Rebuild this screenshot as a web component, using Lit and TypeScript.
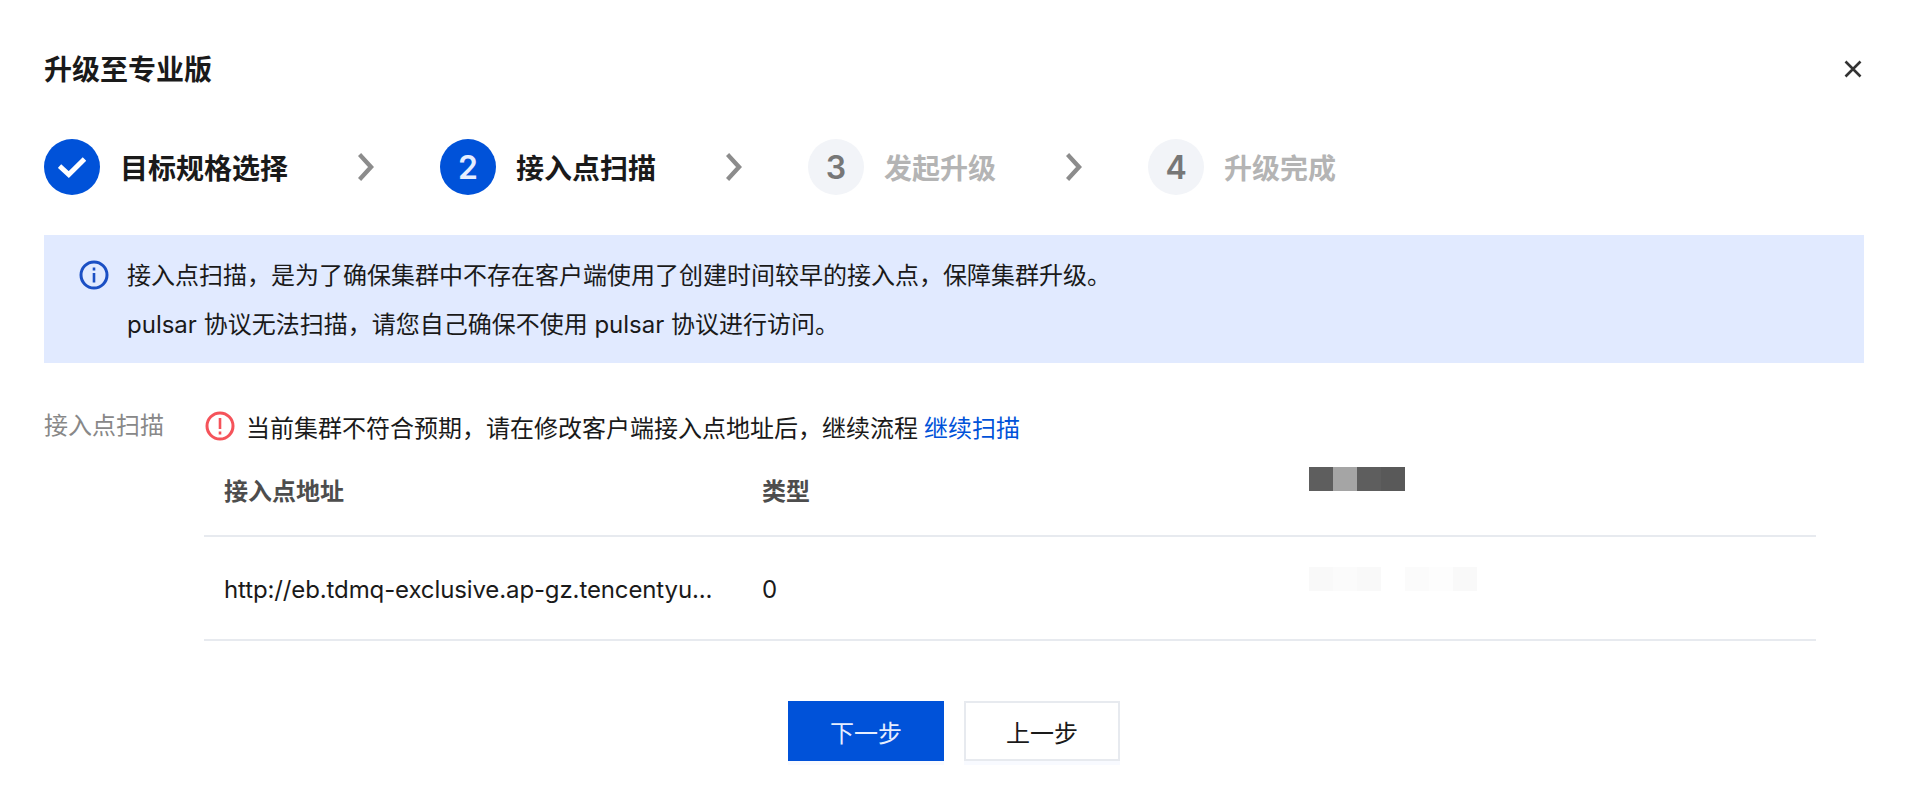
import { LitElement, html, css, svg } from 'lit';
import { customElement } from 'lit/decorators.js';

interface Step {
  label: string;
  state: 'done' | 'current' | 'todo';
}

const STEPS: Step[] = [
  { label: '目标规格选择', state: 'done' },
  { label: '接入点扫描', state: 'current' },
  { label: '发起升级', state: 'todo' },
  { label: '升级完成', state: 'todo' },
];

// Mosaic colours standing in for the redacted column
const HEAD_MOSAIC = ['#5e5e5e', '#a5a5a5', '#5e5e5e', '#595959'];
const CELL_MOSAIC = ['#f9f9f9', '#fbfbfb', '#f9f9f9', '#ffffff', '#fbfbfb', '#fdfdfd', '#f9f9f9'];

const chevron = svg`<path d="M1.5 1.5 L13 14 L1.5 26.5" fill="none" stroke="#8c8c8c" stroke-width="4.4"/>`;

@customElement('app-root')
export class AppRoot extends LitElement {
  static styles = css`
    :host {
      display: block;
      height: 808px;
      box-sizing: border-box;
      padding: 0 44px;
      background: #fff;
      color: #1a1a1a;
      font-family: 'Inter', 'Noto Sans CJK SC', sans-serif;
      font-size: 24px;
      position: relative;
      overflow: hidden;
    }

    .header {
      height: 139px;
      padding-top: 49px;
      box-sizing: border-box;
      font-size: 28px;
      line-height: 42px;
      font-weight: 600;
    }
    .close {
      position: absolute;
      top: 60px;
      right: 46px;
      width: 18px;
      height: 18px;
    }

    .steps {
      display: flex;
      align-items: center;
      height: 56px;
    }
    .step {
      display: flex;
      align-items: center;
      gap: 20px;
    }
    .circle {
      width: 56px;
      height: 56px;
      border-radius: 50%;
      display: flex;
      align-items: center;
      justify-content: center;
      font-size: 32px;
      font-weight: 600;
      flex: none;
    }
    .step-label {
      font-size: 28px;
      font-weight: 600;
      white-space: nowrap;
    }
    .done .circle,
    .current .circle {
      background: #0052d9;
      color: #e6eeff;
    }
    .todo .circle {
      background: #f2f4f8;
      color: #777;
    }
    .todo .step-label {
      color: #b4b4b4;
    }
    .sep {
      width: 16px;
      height: 28px;
      margin: 0 66px 0 70px;
      flex: none;
    }

    .alert {
      margin-top: 40px;
      height: 128px;
      box-sizing: border-box;
      background: #e1eaff;
      padding: 16px 35px;
      display: flex;
      gap: 18px;
      line-height: 49px;
    }
    .alert svg {
      width: 30px;
      height: 30px;
      margin-top: 9px;
      flex: none;
    }

    .form {
      display: flex;
      margin-top: 40px;
    }
    .form-label {
      width: 160px;
      flex: none;
      color: #888;
      line-height: 46px;
    }
    .form-body {
      width: 1612px;
    }
    .status {
      display: flex;
      align-items: center;
      height: 46px;
      box-sizing: border-box;
    }
    .status svg {
      width: 30px;
      height: 30px;
      margin: 0 11px 0 1px;
      flex: none;
    }
    .status span {
      white-space: nowrap;
    }
    .status a {
      color: #0052d9;
      margin-left: 6px;
    }

    .row {
      display: grid;
      grid-template-columns: 538px 547px 1fr;
      padding: 0 20px;
      border-bottom: 2px solid #e7eaef;
      align-items: center;
      box-sizing: border-box;
    }
    .head {
      height: 88px;
      padding-bottom: 6px;
      color: #4d4d4d;
      font-weight: 600;
    }
    .body {
      height: 104px;
      padding-top: 3px;
    }
    .url {
      white-space: nowrap;
      letter-spacing: -0.12px;
    }
    .mosaic {
      display: flex;
    }
    .mosaic i {
      width: 24px;
      height: 24px;
      display: block;
    }
    .head .mosaic {
      margin-top: -20px;
    }
    .body .mosaic {
      margin-top: -21px;
    }

    .actions {
      display: flex;
      justify-content: center;
      gap: 20px;
      margin-top: 60px;
    }
    button {
      width: 156px;
      height: 60px;
      font: inherit;
      border: 2px solid #e7eaef;
      background: #fff;
      color: #1a1a1a;
      padding: 0;
      box-shadow: 0 4px 0 #f8faff;
    }
    button.primary {
      background: #0052d9;
      border-color: #0052d9;
      color: #e6eeff;
    }
  `;

  private renderCircle(step: Step, index: number) {
    if (step.state === 'done') {
      return html`<svg width="28" height="24" viewBox="0 0 28 24">
        <path d="M1.5 11 L10.8 19.5 L26.5 4" fill="none" stroke="#fff" stroke-width="5" />
      </svg>`;
    }
    return index + 1;
  }

  private renderMosaic(colors: string[]) {
    return html`<div class="mosaic">
      ${colors.map((c) => html`<i style="background:${c}"></i>`)}
    </div>`;
  }

  render() {
    return html`
      <div class="header">升级至专业版</div>
      <svg class="close" viewBox="0 0 18 18">
        <path d="M1.5 1.5 L16.5 16.5 M16.5 1.5 L1.5 16.5" stroke="#333" stroke-width="2.6" fill="none" />
      </svg>

      <div class="steps">
        ${STEPS.map(
          (step, i) => html`
            ${i > 0 ? html`<svg class="sep" viewBox="0 0 16 28">${chevron}</svg>` : ''}
            <div class="step ${step.state}">
              <div class="circle">${this.renderCircle(step, i)}</div>
              <div class="step-label">${step.label}</div>
            </div>
          `
        )}
      </div>

      <div class="alert">
        <svg viewBox="0 0 30 30">
          <circle cx="15" cy="15" r="13" fill="none" stroke="#1a4fc4" stroke-width="3" />
          <path d="M15 13 V22.5 M15 7.5 V10.4" stroke="#1a4fc4" stroke-width="2.6" fill="none" />
        </svg>
        <div>
          <div>接入点扫描，是为了确保集群中不存在客户端使用了创建时间较早的接入点，保障集群升级。</div>
          <div>pulsar 协议无法扫描，请您自己确保不使用 pulsar 协议进行访问。</div>
        </div>
      </div>

      <div class="form">
        <div class="form-label">接入点扫描</div>
        <div class="form-body">
          <div class="status">
            <svg viewBox="0 0 30 30">
              <circle cx="15" cy="15" r="13" fill="none" stroke="#f5535a" stroke-width="3" />
              <path d="M15 7 V18 M15 20.4 V23.4" stroke="#f5535a" stroke-width="2.6" fill="none" />
            </svg>
            <span>当前集群不符合预期，请在修改客户端接入点地址后，继续流程</span>
            <a>继续扫描</a>
          </div>
          <div class="row head">
            <div>接入点地址</div>
            <div>类型</div>
            ${this.renderMosaic(HEAD_MOSAIC)}
          </div>
          <div class="row body">
            <div class="url">http://eb.tdmq-exclusive.ap-gz.tencentyu...</div>
            <div>0</div>
            ${this.renderMosaic(CELL_MOSAIC)}
          </div>
        </div>
      </div>

      <div class="actions">
        <button class="primary">下一步</button>
        <button>上一步</button>
      </div>
    `;
  }
}
